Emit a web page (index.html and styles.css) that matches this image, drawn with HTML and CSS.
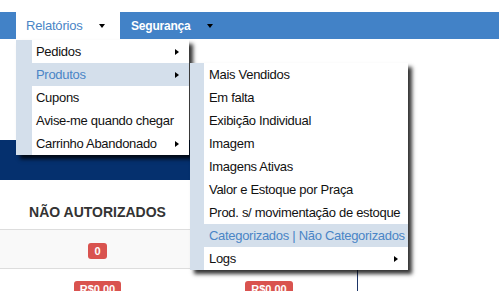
FILE: index.html
```html
<!DOCTYPE html>
<html lang="pt-BR">
<head>
  <meta charset="UTF-8">
  <title>Relatórios</title>
  <link rel="stylesheet" href="styles.css">
</head>
<body>
  <div class="topbar">
    <ul class="nav">
      <li class="nav-item open">
        <a class="nav-link">Relatórios <span class="caret"></span></a>
        <ul class="menu">
          <li>Pedidos <span class="arrow"></span></li>
          <li class="active">Produtos <span class="arrow"></span>
            <ul class="menu sub">
              <li>Mais Vendidos</li>
              <li>Em falta</li>
              <li>Exibição Individual</li>
              <li>Imagem</li>
              <li>Imagens Ativas</li>
              <li>Valor e Estoque por Praça</li>
              <li>Prod. s/ movimentação de estoque</li>
              <li class="active">Categorizados | Não Categorizados</li>
              <li>Logs <span class="arrow"></span></li>
            </ul>
          </li>
          <li>Cupons</li>
          <li>Avise-me quando chegar</li>
          <li>Carrinho Abandonado <span class="arrow"></span></li>
        </ul>
      </li>
      <li class="nav-item">
        <a class="nav-link">Segurança <span class="caret"></span></a>
      </li>
    </ul>
  </div>

  <div class="panel">
    <div class="band"></div>
    <table class="stats">
      <thead>
        <tr>
          <th class="col-a">NÃO AUTORIZADOS</th>
          <th class="col-b"></th>
          <th></th>
        </tr>
      </thead>
      <tbody>
        <tr class="striped">
          <td><span class="badge">0</span></td>
          <td><span class="badge">0</span></td>
          <td></td>
        </tr>
        <tr>
          <td><span class="badge">R$0.00</span></td>
          <td><span class="badge">R$0.00</span></td>
          <td></td>
        </tr>
      </tbody>
    </table>
  </div>
</body>
</html>
```

FILE: styles.css
```css
body {
  margin: 0;
  font-family: "Liberation Sans", Arial, sans-serif;
  font-size: 13px;
  color: #111;
  background: #fff;
  overflow: hidden;
}
ul {
  list-style: none;
  margin: 0;
  padding: 0;
}
.topbar {
  margin-top: 12px;
  height: 27px;
  background-color: #4282c7;
  padding-left: 16px;
  position: relative;
  z-index: 10;
}
.nav {
  display: flex;
  height: 27px;
}
.nav-item {
  position: relative;
}
.nav-link {
  display: flex;
  align-items: center;
  height: 27px;
  padding: 0 12px 0 11px;
  color: #fff;
  font-weight: bold;
  font-size: 12px;
  letter-spacing: -0.2px;
}
.nav-item.open {
  background: #fff;
  height: 28px;
}
.nav-item.open .nav-link {
  width: 104px;
  box-sizing: border-box;
  justify-content: space-between;
  padding: 0 15px 0 10px;
  color: #4a85c6;
  font-weight: normal;
  font-size: 13px;
}
.caret {
  display: inline-block;
  width: 0;
  height: 0;
  margin-left: 16px;
  border-left: 3.5px solid transparent;
  border-right: 3.5px solid transparent;
  border-top: 4px solid #000;
}
.menu {
  position: absolute;
  top: 28px;
  left: 0;
  width: 173px;
  box-sizing: border-box;
  background: #fff;
  border-left: 16px solid #d4dfeb;
  box-shadow: 4px 4px 4px rgba(0, 0, 0, 0.8);
  letter-spacing: -0.3px;
}
.menu li {
  position: relative;
  display: flex;
  align-items: center;
  justify-content: space-between;
  height: 23px;
  padding: 0 10px 0 4px;
  color: #111;
  white-space: nowrap;
}
.menu li.active {
  background-color: #d4dfeb;
  color: #4a85c6;
}
.menu.sub {
  top: 0;
  left: calc(100% + 1px);
  width: 218px;
  border-left-width: 14px;
}
.menu.sub li {
  padding-left: 5px;
  padding-right: 10px;
}
.arrow {
  display: inline-block;
  width: 0;
  height: 0;
  border-top: 3.5px solid transparent;
  border-bottom: 3.5px solid transparent;
  border-left: 4px solid #000;
}
.panel {
  margin-top: 101px;
  width: 357px;
  border-right: 1px solid #1d3567;
}
.band {
  height: 40px;
  background-color: #05306e;
}
.stats {
  width: 357px;
  border-collapse: collapse;
}
.stats th {
  padding: 25px 0 10px;
  font-size: 14px;
  line-height: 14px;
  color: #333;
  text-align: center;
}
.col-a {
  width: 195px;
}
.col-b {
  width: 148px;
}
.stats td {
  text-align: center;
  border-top: 1px solid #ddd;
  padding: 12px 0 9px;
  line-height: 16px;
}
.striped td {
  background: #f9f9f9;
  padding-top: 13px;
}
.badge {
  display: inline-block;
  padding: 0 6px;
  background-color: #d9534f;
  color: #fff;
  font-size: 11px;
  font-weight: bold;
  line-height: 16px;
  border-radius: 3px;
}
```
